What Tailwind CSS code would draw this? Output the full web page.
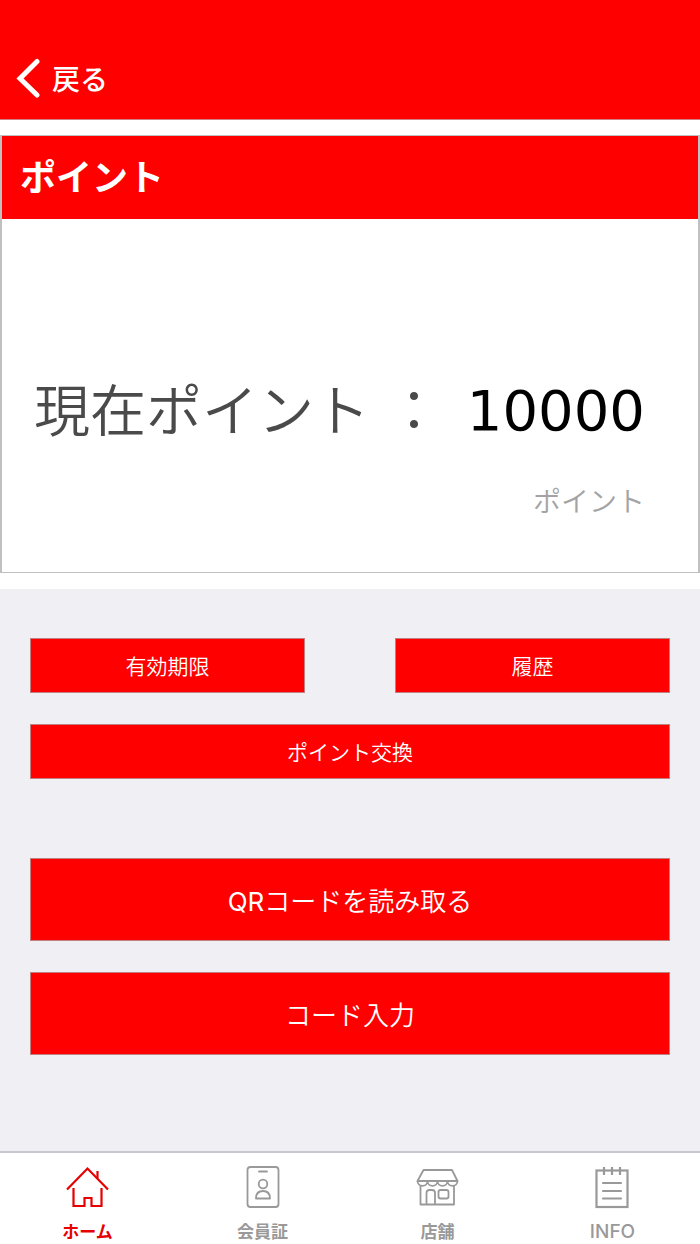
<!DOCTYPE html>
<html lang="ja">
<head>
    <meta charset="UTF-8">
    <meta name="viewport" content="width=device-width, initial-scale=1.0">
    <title>ポイント</title>
    <script src="https://cdn.jsdelivr.net/npm/@tailwindcss/browser@4"></script>
</head>
<body class="bg-[#efeff4] min-h-screen flex flex-col font-['Noto_Sans_CJK_JP',sans-serif]">
    <!-- Header -->
    <header class="bg-[#ff0000] h-[120px] flex items-end px-4 pb-5 border-b border-[#d08080]">
        <a href="#" class="flex items-center gap-3 text-white text-[28px] leading-[42px] font-medium">
            <svg class="w-6 h-10" viewBox="0 0 24 40" fill="none" stroke="currentColor" stroke-width="5" stroke-linecap="round" stroke-linejoin="miter">
                <path d="M21 3.500L4 20.500L21 37"/>
            </svg>
            戻る
        </a>
    </header>

    <!-- Point card -->
    <main class="flex-1 flex flex-col">
        <section class="bg-white pt-[15px] pb-4">
            <div class="border-x-2 border-y border-[#c0c0c0]">
                <h1 class="bg-[#ff0000] text-white text-[36px] leading-[79px] pb-1 font-bold px-[18px]">ポイント</h1>
                <div class="pt-[150px] pb-12 pl-8 pr-[53px]">
                    <div class="flex items-center justify-between">
                        <p class="text-[56px] leading-[76px] pb-2 text-[#4a4a4a] font-[350]">現在ポイント<span class="ml-4">：</span></p>
                        <p class="text-[56px] leading-[84px] text-black font-['DejaVu_Sans',sans-serif]">10000</p>
                    </div>
                    <p class="mt-6 text-right text-[28px] leading-[47px] text-[#a3a3a3] font-[350]">ポイント</p>
                </div>
            </div>
        </section>

        <!-- Actions -->
        <section class="px-[30px] pt-[49px] text-white font-[350]">
            <div class="flex gap-[90px] text-[21px] leading-[53px]">
                <button type="button" class="flex-1 bg-[#ff0000] border border-[#c08080]">有効期限</button>
                <button type="button" class="flex-1 bg-[#ff0000] border border-[#c08080]">履歴</button>
            </div>
            <button type="button" class="mt-[31px] w-full bg-[#ff0000] border border-[#c08080] text-[21px] leading-[53px]">ポイント交換</button>
            <button type="button" class="mt-[79px] w-full bg-[#ff0000] border border-[#c08080] text-[26px] leading-[81px]"><span class="font-['Inter',sans-serif] font-normal leading-none">QR</span>コードを読み取る</button>
            <button type="button" class="mt-[31px] w-full bg-[#ff0000] border border-[#c08080] text-[26px] leading-[81px]">コード入力</button>
        </section>
    </main>

    <!-- Tab bar -->
    <nav class="bg-white border-t-2 border-[#c8c8d0] grid grid-cols-4 h-[93px] pt-[11px] text-[17px] leading-[37px] font-bold text-[#999999]">
        <a href="#" class="flex flex-col items-center text-[#e60000]">
            <svg class="size-12" viewBox="0 0 48 48" fill="none" stroke="currentColor" stroke-width="2.200">
                <path d="M3 25.500L23.500 4.500L44 25.500"/>
                <path d="M33.500 7V14.500"/>
                <path d="M9.500 24V42H20.500V34H27.500V42H37.500V24"/>
            </svg>
            ホーム
        </a>
        <a href="#" class="flex flex-col items-center">
            <svg class="size-12" viewBox="0 0 48 48" fill="none" stroke="currentColor" stroke-width="1.800" stroke-linecap="round">
                <rect x="8.500" y="3" width="31" height="40" rx="3"/>
                <path d="M20 7.500H28"/>
                <circle cx="24" cy="20" r="4.300"/>
                <path d="M17 34.500C17 29 20 27 24 27S31 29 31 34.500Z" stroke-linejoin="round"/>
            </svg>
            会員証
        </a>
        <a href="#" class="flex flex-col items-center">
            <svg class="size-12" viewBox="0 0 48 48" fill="none" stroke="currentColor" stroke-width="1.800" stroke-linejoin="round">
                <path d="M9.500 6H38L43.500 17H3.500Z"/>
                <path d="M3.500 17C3.500 23.500 13.500 23.500 13.500 17C13.500 23.500 23.500 23.500 23.500 17C23.500 23.500 33.500 23.500 33.500 17C33.500 23.500 43.500 23.500 43.500 17"/>
                <path d="M6.500 21V40.500H40V21"/>
                <path d="M12.500 40V29Q12.500 26 15.500 26H18Q21 26 21 29V40"/>
                <rect x="24.500" y="26" width="10" height="8.500" rx="2"/>
            </svg>
            店舗
        </a>
        <a href="#" class="flex flex-col items-center">
            <svg class="size-12" viewBox="0 0 48 48" fill="none" stroke="currentColor" stroke-width="2.200">
                <rect x="7.500" y="6.500" width="31" height="36.500"/>
                <path d="M15 3V11M23 3V11M31 3V11"/>
                <path d="M14 19H32M14 27H32M14 34.500H32" stroke-linecap="round"/>
            </svg>
            <span class="font-['Inter',sans-serif] text-[19px] leading-[40px] font-medium">INFO</span>
        </a>
    </nav>
</body>
</html>
